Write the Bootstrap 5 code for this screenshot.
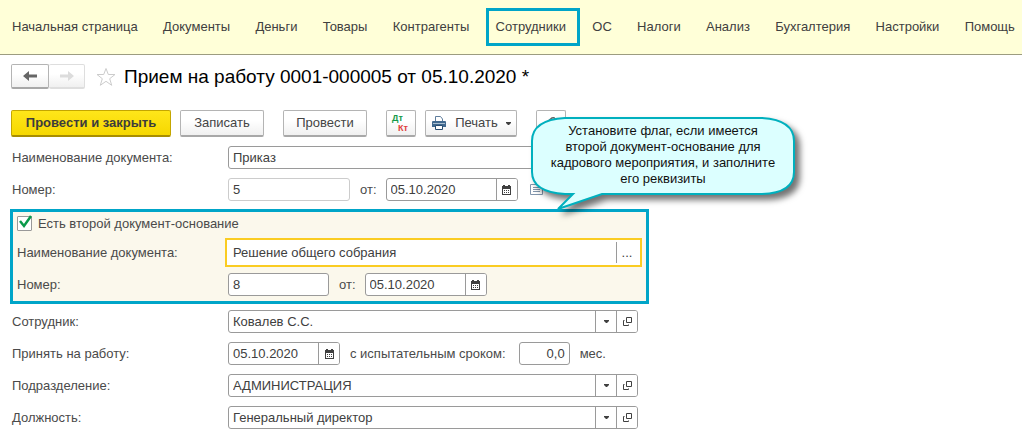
<!DOCTYPE html>
<html lang="ru">
<head>
<meta charset="utf-8">
<meta name="viewport" content="width=device-width, initial-scale=1">
<title>Прием на работу</title>
<link href="https://cdn.jsdelivr.net/npm/bootstrap@5.3.0/dist/css/bootstrap.min.css" rel="stylesheet">
<style>
body{font-family:"Liberation Sans",Arial,sans-serif;font-size:13px;line-height:16px;color:#4a4a4a;background:#fff}
.topmenu{background:#ffffd8;border-bottom:1px solid #9c9c80;height:55px;padding:0 4px 0 9px}
.topmenu .nav-link{color:#404040;padding:2px 3px;line-height:16px;white-space:nowrap}
.topmenu .nav-link.active{outline:3px solid #00a5c8;outline-offset:7px;padding:1px 4px 1px 0;margin-left:4px}
.workarea{padding:9px 10px 4px}
.inset{padding-left:1px}
.star{margin:0 8px 0 11px}
.toolbar{margin:21px 0 9px}
.tool{font:inherit;height:27px;color:#444;background:linear-gradient(#fff 40%,#f0f0f0);border:1px solid #b4b4b4;border-bottom:2px solid #a8a8a8;border-radius:2px;padding:0}
.tool.main{width:160px;background:linear-gradient(#ffe61a,#f6d800);border-color:#c4a600;border-bottom-color:#a88e00;color:#3c3c3c;font-weight:bold}
.tool.arrow{width:38px;height:25px}
.tool.arrow + .arrow{width:36px;border-color:#dedede;border-left-width:0}
.tool.square{width:30px}
.tool.text{width:84px}
.tool.print{width:92px}
.gap-s{margin-left:9px}
.gap-l{margin-left:19px}
.doc-title{font-size:19px;line-height:24px;color:#000;margin:0}
.form-area{max-width:639px}
.line{height:23px;display:flex;align-items:center;padding:0 11px 0 2px;margin-bottom:9px}
.line > .cap{width:216px;flex:none}
.mid{margin:0 9px 0 10px}
.mid.trial{margin-right:13px}
.list-icon{margin-left:12px}
.field{display:flex;height:23px;background:#fff;border:1px solid #9a9a9a;border-radius:3px;overflow:hidden;flex:none}
.field input{font:inherit;color:#404040;border:0;outline:0;background:none;padding:0 4px;min-width:0;width:100%;flex:1}
.field button{width:21px;flex:none;padding:0;border:0;border-left:1px solid #9a9a9a;background:#fff;display:flex;align-items:center;justify-content:center;color:#404040}
.field.wide{flex:1}
.field.off{border-color:#ccc}
.w-num{width:122px}.w-date{width:132px}.w-short{width:101px}.w-small{width:112px}.w-tiny{width:51px}
.marked{background:#fbf8ec;border:3px solid #00a5c8;margin:-1px 0 6px;padding-bottom:5px}
.marked .line{padding:0 4px;margin-bottom:0}
.marked .line > .cap{width:211px}
.marked .line.check{margin-bottom:3px}
.marked .line.current{height:29px;margin-bottom:6px}
.marked .line.current > .cap{width:208px}
.field.sel{height:29px;border:2px solid #facc22;border-radius:0;padding:2px 3px}
.field.sel input{padding-left:3px}
.tick{appearance:none;display:block;width:15px;height:15px;border:1px solid #999;border-radius:1px;background:#fff;margin:0}
.tickbox{position:relative;width:15px;height:15px;margin-right:6px;flex:none}
.tickbox svg{position:absolute;left:1px;top:-1px;pointer-events:none}
.hint{position:absolute;left:520px;top:51px;width:290px;height:115px}
.hint svg{position:absolute;left:0;top:0;filter:drop-shadow(5px 5px 3px rgba(0,0,0,.55))}
.hint p{position:relative;margin:0;padding:17px 20px 0 16px;text-align:center;color:#111;font-size:13px;line-height:16px}
</style>
</head>
<body>
<svg class="d-none">
<symbol id="cal" viewBox="0 0 9 10"><path fill="#404040" fill-rule="evenodd" d="M0 1h1V0h2v1h3V0h2v1h1v9H0zM1 4v5h7V4z"/><path fill="#404040" d="M2 5h1v1H2zm2 0h1v1H4zm2 0h1v1H6zM2 7h1v1H2zm2 0h1v1H4zm2 0h1v1H6z"/></symbol>
<symbol id="caret" viewBox="0 0 5 3"><path fill="#404040" d="M0 0h5v1L3 3H2L0 1z"/></symbol>
<symbol id="open" viewBox="0 0 9 9"><path fill="none" stroke="#404040" d="M3.500.5h5v5h-5zM1.500 3.500h-1v5h5v-1"/></symbol>
</svg>

<nav class="topmenu d-flex align-items-center" aria-label="Разделы">
<div class="nav flex-nowrap w-100 justify-content-between align-items-center">
<a class="nav-link" href="#">Начальная страница</a>
<a class="nav-link" href="#">Документы</a>
<a class="nav-link" href="#">Деньги</a>
<a class="nav-link" href="#">Товары</a>
<a class="nav-link" href="#">Контрагенты</a>
<a class="nav-link active" href="#">Сотрудники</a>
<a class="nav-link" href="#">ОС</a>
<a class="nav-link" href="#">Налоги</a>
<a class="nav-link" href="#">Анализ</a>
<a class="nav-link" href="#">Бухгалтерия</a>
<a class="nav-link" href="#">Настройки</a>
<a class="nav-link" href="#">Помощь</a>
</div>
</nav>

<main class="workarea position-relative">
<div class="inset d-flex align-items-center">
<button class="tool arrow" aria-label="Назад"><svg class="d-block mx-auto" width="14" height="12" viewBox="0 0 14 12"><path d="M0 6l6-5v3.500h8v3H6V11z" fill="#666"/></svg></button>
<button class="tool arrow" aria-label="Вперед" disabled><svg class="d-block mx-auto" width="14" height="12" viewBox="0 0 14 12"><path d="M14 6L8 1v3.500H0v3h8V11z" fill="#dcdcdc"/></svg></button>
<svg class="star" width="20" height="20" viewBox="0 0 20 20"><path d="M10 1.500l2.300 6H19l-5.300 4.200 2 6.600L10 14.300l-5.700 4 2-6.600L1 7.500h6.700z" fill="#fff" stroke="#ccc"/></svg>
<h1 class="doc-title">Прием на работу 0001-000005 от 05.10.2020 *</h1>
</div>

<div class="toolbar inset d-flex">
<button class="tool main">Провести и закрыть</button>
<button class="tool text gap-s">Записать</button>
<button class="tool text gap-l">Провести</button>
<button class="tool square gap-l" aria-label="Проводки"><svg class="d-block mx-auto" width="20" height="20" viewBox="0 0 20 20" font-family="Liberation Sans" font-weight="bold" font-size="9"><text x="1" y="8" fill="#149a4a">Дт</text><text x="7" y="18" fill="#e0403c">Кт</text></svg></button>
<button class="tool print gap-s d-flex align-items-center justify-content-center"><svg width="16" height="16" viewBox="0 0 16 16"><path d="M4.500 7V1.500h5L11.500 4v3" fill="#fff" stroke="#5f7d9c"/><path d="M2 6h12q1 0 1 1v5H1V7q0-1 1-1z" fill="#41698f"/><path d="M2 8h12v1H2z" fill="#a9bfd2"/><path d="M4.500 10.500h7v4h-7z" fill="#fff" stroke="#274c70"/></svg><span class="mx-2">Печать</span><svg width="5" height="3"><use href="#caret"/></svg></button>
<button class="tool square gap-l" aria-label="Вложения"><svg class="d-block mx-auto" width="16" height="16" viewBox="0 0 16 16"><path d="M4 7l5-4q2-1 3 1l-6 8" fill="none" stroke="#666" stroke-width="1.500"/></svg></button>
</div>

<form class="form-area">
<div class="line"><label class="cap" for="a1">Наименование документа:</label><div class="field wide"><input id="a1" value="Приказ"></div></div>
<div class="line"><label class="cap" for="a2">Номер:</label><div class="field off w-num"><input id="a2" value="5"></div>
<label class="mid" for="a3">от:</label><div class="field w-date"><input id="a3" value="05.10.2020"><button type="button" aria-label="Календарь"><svg width="9" height="10"><use href="#cal"/></svg></button></div>
<svg class="list-icon" width="13" height="11" viewBox="0 0 13 11"><path d="M.5.500h12v10H.5zM3 3.500h7M3 5.500h7M3 7.500h7" fill="none" stroke="#8296ad"/></svg></div>

<div class="marked">
<div class="line check"><div class="tickbox"><input class="tick" type="checkbox" id="b0" checked><svg width="15" height="14" viewBox="0 0 15 14"><path d="M2 6l4 5 7-10" fill="none" stroke="#0a9a4a" stroke-width="2.500"/></svg></div><label for="b0">Есть второй документ-основание</label></div>
<div class="line current"><label class="cap" for="b1">Наименование документа:</label><div class="field wide sel"><input id="b1" value="Решение общего собрания"><button type="button">...</button></div></div>
<div class="line"><label class="cap" for="b2">Номер:</label><div class="field w-short"><input id="b2" value="8"></div><label class="mid" for="b3">от:</label><div class="field w-num"><input id="b3" value="05.10.2020"><button type="button" aria-label="Календарь"><svg width="9" height="10"><use href="#cal"/></svg></button></div></div>
</div>

<div class="line"><label class="cap" for="c1">Сотрудник:</label><div class="field wide"><input id="c1" value="Ковалев С.С."><button type="button" aria-label="Выбрать"><svg width="5" height="3"><use href="#caret"/></svg></button><button type="button" aria-label="Открыть"><svg width="9" height="9"><use href="#open"/></svg></button></div></div>
<div class="line"><label class="cap" for="c2">Принять на работу:</label><div class="field w-small"><input id="c2" value="05.10.2020"><button type="button" aria-label="Календарь"><svg width="9" height="10"><use href="#cal"/></svg></button></div><label class="mid trial" for="c3">с испытательным сроком:</label><div class="field w-tiny"><input id="c3" class="text-end" value="0,0"></div><span class="mid">мес.</span></div>
<div class="line"><label class="cap" for="c4">Подразделение:</label><div class="field wide"><input id="c4" value="АДМИНИСТРАЦИЯ"><button type="button" aria-label="Выбрать"><svg width="5" height="3"><use href="#caret"/></svg></button><button type="button" aria-label="Открыть"><svg width="9" height="9"><use href="#open"/></svg></button></div></div>
<div class="line mb-0"><label class="cap" for="c5">Должность:</label><div class="field wide"><input id="c5" value="Генеральный директор"><button type="button" aria-label="Выбрать"><svg width="5" height="3"><use href="#caret"/></svg></button><button type="button" aria-label="Открыть"><svg width="9" height="9"><use href="#open"/></svg></button></div></div>
</form>

<div class="hint" role="note">
<svg width="290" height="115" viewBox="0 0 290 115"><path d="M45 12H242Q274 14 274 35V66Q274 87 242 88H82L38 103 53 88H45Q12 86 12 66V35Q12 14 45 12z" fill="#dcffff" stroke="#00b0be" stroke-width="2"/></svg>
<p>Установите флаг, если имеется<br>второй документ-основание для<br>кадрового мероприятия, и заполните<br>его реквизиты</p>
</div>
</main>
<script src="https://cdn.jsdelivr.net/npm/bootstrap@5.3.0/dist/js/bootstrap.bundle.min.js"></script>
</body>
</html>
